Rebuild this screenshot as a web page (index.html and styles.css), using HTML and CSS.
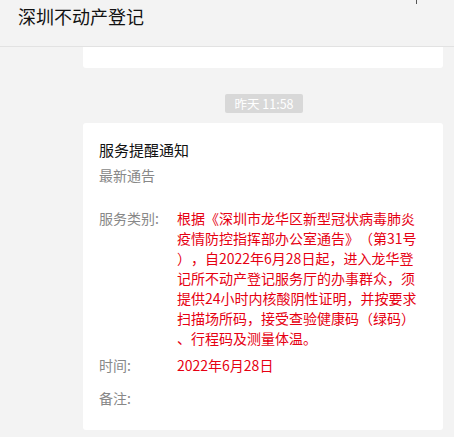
FILE: index.html
```html
<!DOCTYPE html>
<html lang="zh-CN">
<head>
  <meta charset="UTF-8" />
  <meta name="viewport" content="width=device-width, initial-scale=1.0"/>
  <title>深圳不动产登记</title>
  <link rel="stylesheet" href="styles.css">
</head>
<body>
  <!-- Chat header -->
  <header class="chat-header">
    <h1>深圳不动产登记</h1>
    <span class="win-mark"></span>
  </header>

  <!-- Message list -->
  <main class="chat-list">
    <!-- tail of the previous message, scrolled off -->
    <div class="msg-card msg-card-tail"></div>

    <div class="msg-time"><span>昨天 11:58</span></div>

    <article class="msg-card">
      <h2 class="msg-title">服务提醒通知</h2>
      <p class="msg-sub">最新通告</p>

      <div class="msg-row">
        <span class="msg-label">服务类别:</span>
        <span class="msg-value">根据《深圳市龙华区新型冠状病毒肺炎疫情防控指挥部办公室通告》（第31号），自2022年6月28日起，进入龙华登记所不动产登记服务厅的办事群众，须提供24小时内核酸阴性证明，并按要求扫描场所码，接受查验健康码（绿码）、行程码及测量体温。</span>
      </div>
      <div class="msg-row">
        <span class="msg-label">时间:</span>
        <span class="msg-value">2022年6月28日</span>
      </div>
      <div class="msg-row msg-row-last">
        <span class="msg-label">备注:</span>
        <span class="msg-value"></span>
      </div>
    </article>
  </main>
</body>
</html>
```

FILE: styles.css
```css
/* Basic resets */
* {
  margin: 0;
  padding: 0;
  box-sizing: border-box;
}
body {
  font-family: "Noto Sans CJK SC", "Noto Sans", sans-serif;
  background: #f3f3f3;
  color: #1a1a1a;
  height: 437px;
  overflow: hidden;
  text-spacing-trim: space-all;
}

/* Header */
.chat-header {
  position: relative;
  height: 47px;
  padding: 3px 0 0 18px;
  border-bottom: 1px solid #e2e2e2;
  background: #f3f3f3;
}
.chat-header h1 {
  font-size: 18px;
  font-weight: normal;
  line-height: 26px;
  color: #111;
}
.win-mark {
  position: absolute;
  top: 0;
  left: 416px;
  width: 1px;
  height: 4px;
  background: #555;
}

/* Message list */
.chat-list {
  padding: 0 11px 0 83px;
}
.msg-card {
  background: #fff;
  border-radius: 3px;
  padding: 16px 16px 22px;
}
.msg-card-tail {
  height: 21px;
  padding: 0;
  border-radius: 0 0 3px 3px;
}

.msg-time {
  display: flex;
  justify-content: center;
  margin: 26px 0 10px;
  padding-left: 2px;
}
.msg-time span {
  background: #d8d8d8;
  color: #fff;
  font-size: 12.5px;
  line-height: 19px;
  padding: 0 9px;
  border-radius: 2px;
}

.msg-title {
  font-size: 15px;
  font-weight: normal;
  line-height: 22px;
  color: #111;
}
.msg-sub {
  margin-top: 4px;
  font-size: 14px;
  line-height: 20px;
  color: #888;
}

.msg-row {
  display: flex;
  font-size: 14px;
  line-height: 20px;
  margin-top: 7px;
}
.msg-row:first-of-type {
  margin-top: 23px;
}
.msg-row-last {
  margin-top: 13px;
}
.msg-label {
  width: 78px;
  flex-shrink: 0;
  color: #888;
}
.msg-value {
  width: 246px;
  min-height: 20px;
  color: #e60012;
  line-break: anywhere;
}
```
